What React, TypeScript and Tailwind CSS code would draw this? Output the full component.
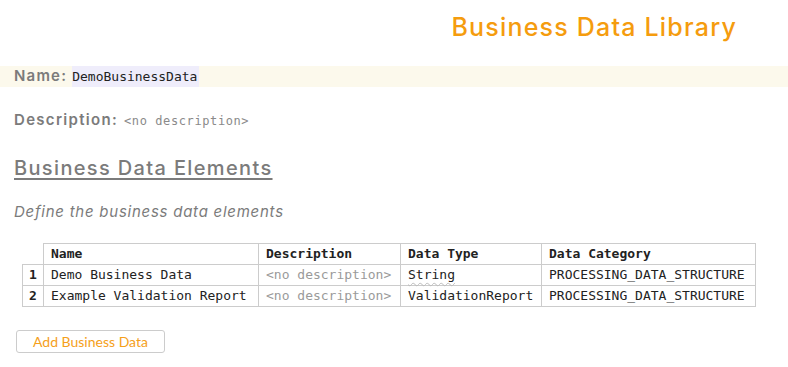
import React from 'react';

interface BusinessDataRow {
  name: string;
  description?: string;
  dataType: string;
  category: string;
}

const rows: BusinessDataRow[] = [
  { name: 'Demo Business Data', dataType: 'String', category: 'PROCESSING_DATA_STRUCTURE' },
  { name: 'Example Validation Report', dataType: 'ValidationReport', category: 'PROCESSING_DATA_STRUCTURE' },
];

const sans = "font-['Inter',_'Open_Sans',_sans-serif]";
const mono = "font-['DejaVu_Sans_Mono',_'Liberation_Mono',_monospace]";

const App: React.FC = () => {
  return (
    <div className={`w-[788px] h-[367px] bg-white overflow-hidden ${sans}`}>
      {/* Header */}
      <div className="flex justify-end pr-[51px] pt-[11px] h-[66px]">
        <h1 className="text-[25px] leading-[32px] font-medium tracking-[1.2px] text-[#f59c0e]">Business Data Library</h1>
      </div>

      {/* Name */}
      <div className="h-[21px] bg-[#fcf9ec] flex items-center pl-[14px]">
        <span className="text-[15px] font-semibold tracking-[1.2px] text-[#7b7b7b] mr-[5px]">Name:</span>
        <span className={`${mono} h-[21px] leading-[21px] bg-[#efedfb] text-[13px] text-[#222] pr-[2px]`}>
          DemoBusinessData
        </span>
      </div>

      {/* Description */}
      <div className="flex items-baseline pl-[14px] mt-[22px] h-[24px]">
        <span className="text-[15px] font-semibold tracking-[1.3px] text-[#7b7b7b] mr-[6px]">Description:</span>
        <span className={`${mono} text-[12px] tracking-[0.6px] text-[#8a8a8a]`}>&lt;no description&gt;</span>
      </div>

      {/* Section heading */}
      <h2 className="ml-[14px] mt-[22px] text-[20px] leading-[26px] font-medium tracking-[1.35px] text-[#7b7b7b] underline underline-offset-[3px] decoration-[1.5px]">
        Business Data Elements
      </h2>
      <p className="ml-[14px] mt-[21px] text-[15px] leading-[20px] italic tracking-[0.75px] text-[#7b7b7b]">
        Define the business data elements
      </p>

      {/* Table */}
      <table className={`${mono} ml-[22px] mt-[21px] border-collapse text-[13px] text-[#222]`}>
        <thead>
          <tr className="h-[21px]">
            <th className="w-[21px]"></th>
            <th className="border border-[#cccccc] text-left font-bold px-[7px] w-[215px]">Name</th>
            <th className="border border-[#cccccc] text-left font-bold px-[7px] w-[142px]">Description</th>
            <th className="border border-[#cccccc] text-left font-bold px-[7px] w-[141px]">Data Type</th>
            <th className="border border-[#cccccc] text-left font-bold px-[7px] w-[214px]">Data Category</th>
          </tr>
        </thead>
        <tbody>
          {rows.map((row, i) => (
            <tr key={row.name} className="h-[21px]">
              <td className="border border-[#cccccc] text-center font-bold">{i + 1}</td>
              <td className="border border-[#cccccc] px-[7px] whitespace-nowrap">{row.name}</td>
              <td className="border border-[#cccccc] px-[7px] whitespace-nowrap text-[#9a9a9a]">
                {row.description ?? '<no description>'}
              </td>
              <td className="border border-[#cccccc] px-[7px] whitespace-nowrap">
                {row.dataType === 'String' ? (
                  <span className="underline decoration-wavy decoration-[#bbbbbb] underline-offset-[3px] decoration-[1px]">
                    {row.dataType}
                  </span>
                ) : (
                  row.dataType
                )}
              </td>
              <td className="border border-[#cccccc] px-[7px] whitespace-nowrap">{row.category}</td>
            </tr>
          ))}
        </tbody>
      </table>

      {/* Add button */}
      <button className="ml-[16px] mt-[23px] h-[23px] w-[149px] border border-[#cccccc] rounded-[3px] bg-white text-[14px] leading-[20px] text-[#f5a01a] font-['Lato',_sans-serif]">
        Add Business Data
      </button>
    </div>
  );
};

export default App;
